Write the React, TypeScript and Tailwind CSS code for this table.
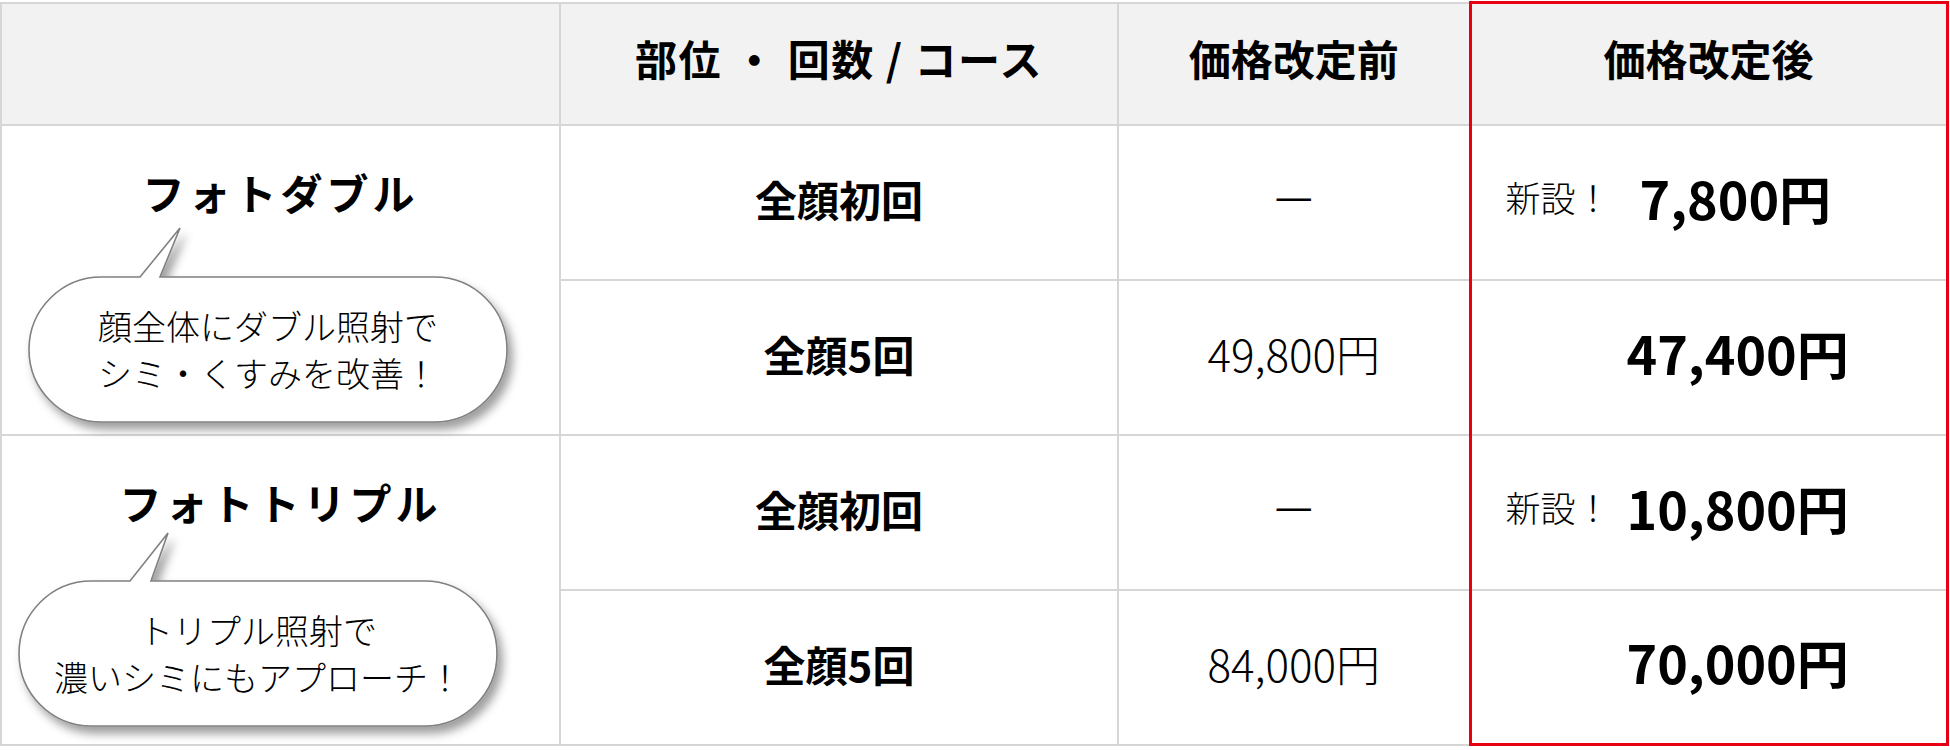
import * as React from "react";

const font = "font-['Noto_Sans_CJK_JP','Noto_Sans',sans-serif]";
const gray = "border-2 border-[#d6d6d6]";
const redCol = "border-y-2 border-y-[#d6d6d6] border-x-[3px] border-x-[#e60012]";

interface BubbleProps {
  lines: string[];
  tail: number;
  baseL: number;
  baseR: number;
  tip: number;
}

const Bubble: React.FC<BubbleProps> = ({ lines, tail, baseL, baseR, tip }) => {
  const w = 478;
  const h = 145;
  const r = h / 2;
  const d = `M ${r} ${tail} L ${baseL} ${tail} L ${tip} 0 L ${baseR} ${tail} L ${w - r} ${tail} A ${r} ${r} 0 0 1 ${w - r} ${tail + h} L ${r} ${tail + h} A ${r} ${r} 0 0 1 ${r} ${tail} Z`;
  return (
    <div className="relative flex flex-col w-[478px]" style={{ height: tail + h, paddingTop: tail }}>
      <svg
        className="absolute left-0 top-0 overflow-visible"
        width={w}
        height={tail + h}
        viewBox={`0 0 ${w} ${tail + h}`}
      >
        <defs>
          <filter id={`sh${tip}`} x="-10%" y="-20%" width="130%" height="150%">
            <feDropShadow dx="5" dy="7" stdDeviation="5" floodColor="#000" floodOpacity="0.38" />
          </filter>
        </defs>
        <path d={d} fill="#fff" stroke="#808080" strokeWidth="1.6" filter={`url(#sh${tip})`} />
      </svg>
      <div className="relative flex flex-col items-center justify-center h-[145px] text-[34px] leading-[47px] font-light text-black">
        {lines.map((l) => (
          <div key={l}>{l}</div>
        ))}
      </div>
    </div>
  );
};

const NameCell: React.FC<{
  name: string;
  pt: number;
  gap: number;
  ml: number;
  bubble: BubbleProps;
}> = ({ name, pt, gap, ml, bubble }) => (
  <td rowSpan={2} className={`${gray} align-top p-0 bg-white`}>
    <div className="flex flex-col" style={{ paddingTop: pt }}>
      <div className="text-center text-[42px] leading-[42px] font-bold tracking-[4px] text-black">{name}</div>
      <div style={{ marginTop: gap, marginLeft: ml }}>
        <Bubble {...bubble} />
      </div>
    </div>
  </td>
);

const Course: React.FC<{ text: string }> = ({ text }) => (
  <td className={`${gray} pb-[7px] text-center text-[42px] font-bold text-black`}>{text}</td>
);

const Before: React.FC<{ text: string }> = ({ text }) => (
  <td className={`${gray} pb-[8px] text-center text-[44px] font-light text-black`}>{text}</td>
);

const After: React.FC<{ label?: string; price: string; shift?: number; last?: boolean }> = ({
  label,
  price,
  shift = 0,
  last,
}) => (
  <td className={`${redCol} ${last ? "border-b-[3px] border-b-[#e60012]" : ""} p-0 pb-[9px]`}>
    <div className="flex items-center pl-[34px]">
      <span className="w-[121px] text-[35px] font-light text-black">{label ?? ""}</span>
      <span className="text-[52px] font-bold text-black" style={{ marginLeft: shift }}>
        {price}
      </span>
    </div>
  </td>
);

export default function App() {
  return (
    <div className={`${font} bg-white w-[1950px] h-[750px] pt-[1px]`}>
      <table className="table-fixed border-collapse w-[1946px]">
        <colgroup>
          <col className="w-[559px]" />
          <col className="w-[558px]" />
          <col className="w-[352px]" />
          <col className="w-[477px]" />
        </colgroup>
        <thead>
          <tr className="h-[122px] bg-[#f2f2f2]">
            <th className={gray}></th>
            <th className={`${gray} pb-[12px] text-[42px] font-bold tracking-[1.5px] text-black`}>部位 ・ 回数 / コース</th>
            <th className={`${gray} pb-[12px] text-[42px] font-bold text-black`}>価格改定前</th>
            <th className="border-x-[3px] border-x-[#e60012] border-t-[3px] border-t-[#e60012] border-b-2 border-b-[#d6d6d6] pb-[12px] text-[42px] font-bold text-black">
              価格改定後
            </th>
          </tr>
        </thead>
        <tbody>
          <tr className="h-[155px]">
            <NameCell
              name="フォトダブル"
              pt={45}
              gap={15}
              ml={27}
              bubble={{ lines: ["顔全体にダブル照射で", "シミ・くすみを改善！"], tail: 49, baseL: 111, baseR: 131, tip: 151 }}
            />
            <Course text="全顔初回" />
            <Before text="ー" />
            <After label="新設！" price="7,800円" shift={13} />
          </tr>
          <tr className="h-[155px]">
            <Course text="全顔5回" />
            <Before text="49,800円" />
            <After price="47,400円" />
          </tr>
          <tr className="h-[155px]">
            <NameCell
              name="フォトトリプル"
              pt={45}
              gap={10}
              ml={17}
              bubble={{ lines: ["トリプル照射で", "濃いシミにもアプローチ！"], tail: 48, baseL: 111, baseR: 132, tip: 149 }}
            />
            <Course text="全顔初回" />
            <Before text="ー" />
            <After label="新設！" price="10,800円" />
          </tr>
          <tr className="h-[155px]">
            <Course text="全顔5回" />
            <Before text="84,000円" />
            <After price="70,000円" last />
          </tr>
        </tbody>
      </table>
    </div>
  );
}
